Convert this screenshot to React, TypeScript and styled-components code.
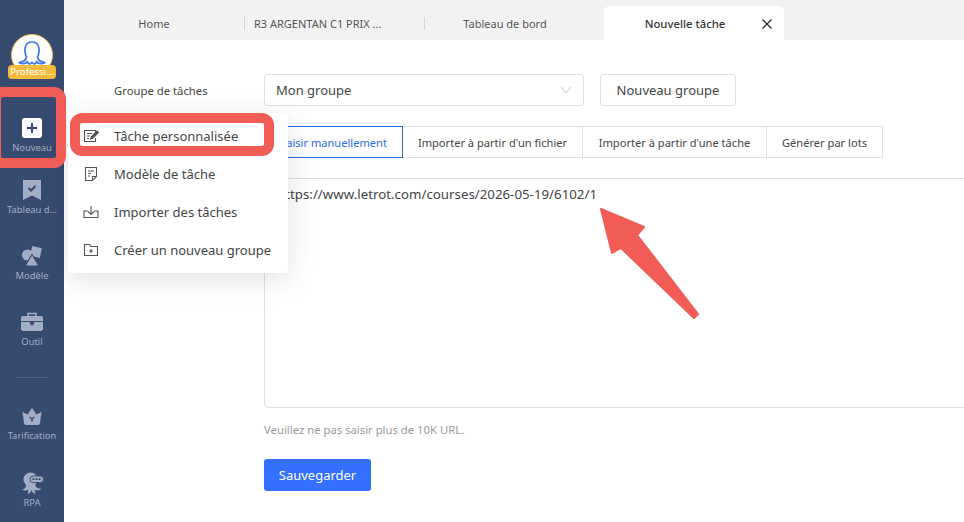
import React from "react";
import styled, { createGlobalStyle } from "styled-components";

const GlobalStyle = createGlobalStyle`
  html, body {
    margin: 0;
    padding: 0;
    width: 964px;
    height: 522px;
    overflow: hidden;
    background: #fff;
    font-family: "Noto Sans", "Open Sans", sans-serif;
  }
  * { box-sizing: border-box; }
`;

const Page = styled.div`
  position: relative;
  display: flex;
  width: 964px;
  height: 522px;
  overflow: hidden;
`;

const Sidebar = styled.aside`
  flex: 0 0 64px;
  display: flex;
  flex-direction: column;
  align-items: center;
  padding-top: 34px;
  background: #374a70;
`;

const Avatar = styled.div`
  position: relative;
  flex: none;
  width: 48px;
  height: 45px;
  margin-bottom: 25px;
`;

const AvatarCircle = styled.div`
  width: 42px;
  height: 42px;
  margin: 0 auto;
  padding: 5px 4px 0;
  border-radius: 50%;
  border: 1px solid #f6c142;
  background: #fff;
`;

const Badge = styled.div`
  position: absolute;
  left: 0;
  bottom: 0;
  width: 48px;
  height: 14px;
  border-radius: 4px;
  background: #f6bb3c;
  color: #fff;
  font-size: 9.6px;
  line-height: 14px;
  text-align: center;
  white-space: nowrap;
`;

const NavItem = styled.div<{ $height?: number }>`
  flex: none;
  display: flex;
  flex-direction: column;
  align-items: center;
  justify-content: center;
  width: 64px;
  height: ${(p) => p.$height ?? 62}px;
  gap: 1px;
  color: #a3aec6;
  font-size: 9.4px;
  line-height: 14px;
  white-space: nowrap;
`;

const NavIcon = styled.svg`
  display: block;
  width: 24px;
  height: 24px;
`;

const NavDivider = styled.div`
  flex: none;
  width: 32px;
  height: 1px;
  margin: 17px 0 12px;
  background: #4d5f83;
`;

const Main = styled.main`
  flex: 1;
  min-width: 0;
  display: flex;
  flex-direction: column;
`;

const TabBar = styled.nav`
  flex: 0 0 40px;
  display: flex;
  align-items: flex-end;
  background: #f2f2f2;
  font-size: 11px;
`;

const Tab = styled.div<{ $active?: boolean; $divider?: boolean; $first?: boolean }>`
  position: relative;
  flex: 0 0 180px;
  height: 34px;
  display: flex;
  align-items: center;
  justify-content: center;
  padding-right: ${(p) => (p.$first ? 0 : 18)}px;
  border-radius: 6px 6px 0 0;
  background: ${(p) => (p.$active ? "#fff" : "transparent")};
  color: ${(p) => (p.$active ? "#333" : "#555")};
  font-size: ${(p) => (p.$active ? 11.3 : 11)}px;
  font-weight: ${(p) => (p.$active ? 500 : 400)};
  &::before {
    content: "";
    display: ${(p) => (p.$divider ? "block" : "none")};
    position: absolute;
    left: 0;
    top: 11px;
    width: 1px;
    height: 13px;
    background: #d4d4d4;
  }
`;

const TabLong = styled.span`
  display: block;
  width: 100%;
  padding-left: 10px;
  white-space: nowrap;
`;

const TabClose = styled.svg`
  position: absolute;
  right: 12px;
  top: 13px;
  width: 10px;
  height: 10px;
`;

const Content = styled.section`
  flex: 1;
  display: flex;
  flex-direction: column;
  padding: 34px 0 0 200px;
`;

const GroupRow = styled.div`
  position: relative;
  display: flex;
  gap: 16px;
  height: 32px;
`;

const FieldLabel = styled.label`
  position: absolute;
  left: -150px;
  top: 1px;
  color: #444;
  font-size: 11.3px;
  line-height: 32px;
  white-space: nowrap;
`;

const Select = styled.div`
  width: 320px;
  height: 32px;
  display: flex;
  align-items: center;
  justify-content: space-between;
  padding: 0 11px;
  border: 1px solid #dcdfe6;
  border-radius: 3px;
  color: #444;
  font-size: 13px;
`;

const GhostButton = styled.button`
  width: 136px;
  height: 32px;
  padding: 0;
  border: 1px solid #dcdfe6;
  border-radius: 3px;
  background: #fff;
  color: #444;
  font-family: inherit;
  font-size: 13px;
`;

const ModeTabs = styled.div`
  display: flex;
  margin-top: 20px;
  height: 32px;
`;

const ModeTab = styled.div<{ $active?: boolean; $w: number }>`
  width: ${(p) => p.$w}px;
  margin-left: -1px;
  display: flex;
  align-items: center;
  justify-content: center;
  border: 1px solid ${(p) => (p.$active ? "#2a6de0" : "#dcdfe6")};
  color: ${(p) => (p.$active ? "#2a6de0" : "#444")};
  font-size: 11.1px;
  white-space: nowrap;
  position: relative;
  z-index: ${(p) => (p.$active ? 1 : 0)};
  &:first-child {
    margin-left: 0;
  }
`;

const UrlBox = styled.div`
  width: 860px;
  height: 230px;
  margin-top: 20px;
  padding: 6px 12px;
  border: 1px solid #dcdfe6;
  border-radius: 4px;
  color: #444;
  font-size: 13.3px;
  line-height: 18px;
`;

const Hint = styled.p`
  margin: 14px 0 0;
  color: #9a9a9a;
  font-size: 11.3px;
  line-height: 16px;
`;

const PrimaryButton = styled.button`
  width: 107px;
  height: 32px;
  margin-top: 21px;
  padding: 0;
  border: none;
  border-radius: 3px;
  background: #3370ff;
  color: #fff;
  font-family: inherit;
  font-size: 13px;
`;

const Menu = styled.ul`
  position: absolute;
  left: 68px;
  top: 113px;
  width: 220px;
  height: 160px;
  margin: 0;
  padding: 4px 0 0;
  list-style: none;
  border-radius: 3px;
  background: #fff;
  box-shadow: 0 6px 30px rgba(0, 0, 0, 0.12);
  z-index: 5;
`;

const MenuItem = styled.li`
  display: flex;
  align-items: center;
  height: 38px;
  padding-left: 15px;
  gap: 15px;
  color: #444;
  font-size: 13px;
  white-space: nowrap;
`;

const MenuIcon = styled.svg`
  flex: none;
  width: 16px;
  height: 16px;
  fill: none;
  stroke: #555;
  stroke-width: 1.1;
`;

const Callout = styled.div<{ $l: number; $t: number; $w: number; $h: number }>`
  position: absolute;
  left: ${(p) => p.$l}px;
  top: ${(p) => p.$t}px;
  width: ${(p) => p.$w}px;
  height: ${(p) => p.$h}px;
  border: 10px solid #f25c57;
  border-radius: 12px;
  pointer-events: none;
  z-index: 6;
`;

const Arrow = styled.svg`
  position: absolute;
  left: 590px;
  top: 200px;
  width: 120px;
  height: 130px;
  z-index: 6;
`;

const navFill = "#a3aec6";
const navBg = "#374a70";

const App = () => (
  <Page>
    <GlobalStyle />
    <Sidebar>
      <Avatar>
        <AvatarCircle>
          <svg width="32" height="26" viewBox="0 0 32 26" fill="none" stroke="#3f77e8" strokeWidth="1.7" strokeLinejoin="round" strokeLinecap="round">
            <path d="M10.500 17C7.500 10 8.500 2 16 2C23.500 2 24.500 10 21.500 17C22 20 25 22 29 22.500C26 24.500 22 24 20.500 21.500C20 24 18 25 16 22.500C14 25 12 24 11.500 21.500C10 24 6 24.500 3 22.500C7 22 10 20 10.500 17Z" />
          </svg>
        </AvatarCircle>
        <Badge>Professi...</Badge>
      </Avatar>

      <NavItem>
        <NavIcon viewBox="0 0 24 24">
          <rect x="2" y="2" width="20" height="20" rx="3" fill="#fff" />
          <path d="M12 7v10M7 12h10" stroke={navBg} strokeWidth="2.2" />
        </NavIcon>
        Nouveau
      </NavItem>
      <NavItem>
        <NavIcon viewBox="0 0 24 24">
          <path d="M3 2h18v20l-9-4.500L3 22z" fill={navFill} />
          <path d="M8.500 10l2.500 2.500 4.500-4.500" stroke={navBg} strokeWidth="2" fill="none" />
        </NavIcon>
        Tableau d...
      </NavItem>
      <NavItem $height={70}>
        <NavIcon viewBox="0 0 24 24">
          <circle cx="7.500" cy="11" r="5.500" fill={navFill} />
          <rect x="11" y="3" width="10" height="10" transform="rotate(12 16 8)" fill={navFill} />
          <path d="M12 10.500l7 11.500H5z" fill={navFill} stroke={navBg} strokeWidth="1.2" />
        </NavIcon>
        Modèle
      </NavItem>
      <NavItem>
        <NavIcon viewBox="0 0 24 24">
          <path d="M8 6V3.500h8V6" fill="none" stroke={navFill} strokeWidth="1.600" />
          <path d="M1 8a2 2 0 0 1 2-2h18a2 2 0 0 1 2 2v3H1z" fill={navFill} />
          <path d="M1 12h9v2h4v-2h9v7a2 2 0 0 1-2 2H3a2 2 0 0 1-2-2z" fill={navFill} />
          <circle cx="12" cy="13.500" r="1.600" fill="none" stroke={navBg} />
        </NavIcon>
        Outil
      </NavItem>

      <NavDivider />

      <NavItem $height={66}>
        <NavIcon viewBox="0 0 24 24">
          <path d="M2.500 8l5 2.500L12 4l4.500 6.500 5-2.500-1.500 11a2 2 0 0 1-2 2H6a2 2 0 0 1-2-2z" fill={navFill} />
          <path d="M9.500 13l2.500 2 2.500-2M12 15v2.500" stroke={navBg} strokeWidth="1.600" fill="none" />
        </NavIcon>
        Tarification
      </NavItem>
      <NavItem $height={68}>
        <NavIcon viewBox="0 0 24 24">
          <circle cx="10.500" cy="8.500" r="7" fill={navFill} />
          <path d="M6 12h9l.5 3c1 2 3.500 3 6 2.500-1.500 2-5 2.500-7 1l1 4.500c-2-.5-3.500-2-4-4-.500 2-2 3.500-4 4l1-4.500c-2 1.500-4.500 1.500-6.500 0 2.500 0 4.500-2 4-6.500z" fill={navFill} />
          <rect x="10" y="5" width="13.500" height="6.500" rx="3.200" fill={navFill} stroke={navBg} strokeWidth=".9" />
          <path d="M12.500 8.200h8.500" stroke={navBg} strokeWidth="1.800" strokeDasharray="2 1" />
        </NavIcon>
        RPA
      </NavItem>
    </Sidebar>

    <Main>
      <TabBar>
        <Tab $first>Home</Tab>
        <Tab $divider>
          <TabLong>R3 ARGENTAN C1 PRIX ...</TabLong>
        </Tab>
        <Tab $divider>Tableau de bord</Tab>
        <Tab $active>
          Nouvelle tâche
          <TabClose viewBox="0 0 10 10">
            <path d="M.5.5l9 9M9.500.5l-9 9" stroke="#222" strokeWidth="1.100" />
          </TabClose>
        </Tab>
      </TabBar>

      <Content>
        <GroupRow>
          <FieldLabel>Groupe de tâches</FieldLabel>
          <Select>
            Mon groupe
            <svg width="12" height="8" viewBox="0 0 12 8" fill="none" stroke="#c4c4c4">
              <path d="M1 1l5 6 5-6" />
            </svg>
          </Select>
          <GhostButton>Nouveau groupe</GhostButton>
        </GroupRow>

        <ModeTabs>
          <ModeTab $active $w={139}>Saisir manuellement</ModeTab>
          <ModeTab $w={181}>Importer à partir d'un fichier</ModeTab>
          <ModeTab $w={185}>Importer à partir d'une tâche</ModeTab>
          <ModeTab $w={117}>Générer par lots</ModeTab>
        </ModeTabs>

        <UrlBox>https://www.letrot.com/courses/2026-05-19/6102/1</UrlBox>
        <Hint>Veuillez ne pas saisir plus de 10K URL.</Hint>
        <PrimaryButton>Sauvegarder</PrimaryButton>
      </Content>
    </Main>

    <Menu>
      <MenuItem>
        <MenuIcon viewBox="0 0 16 16">
          <path d="M12.500 5V2.500h-11v11h11V10" />
          <path d="M4 5.500h5M4 8h3M4 10.500h2" />
          <path d="M7.500 11l1-2.500 5.500-5.500 1.500 1.500-5.500 5.500z" fill="#555" />
        </MenuIcon>
        Tâche personnalisée
      </MenuItem>
      <MenuItem>
        <MenuIcon viewBox="0 0 16 16">
          <path d="M2.500 1.500h11v9l-4 4h-7z" />
          <path d="M9.500 14.500v-4h4M5 5h6M5 7.500h3M5 10h2" />
        </MenuIcon>
        Modèle de tâche
      </MenuItem>
      <MenuItem>
        <MenuIcon viewBox="0 0 16 16">
          <path d="M5 7H1v6.500h14V7h-4" />
          <path d="M8 2v8M5 7.500L8 10.500l3-3" />
        </MenuIcon>
        Importer des tâches
      </MenuItem>
      <MenuItem>
        <MenuIcon viewBox="0 0 16 16">
          <path d="M1.500 2.500h5l1.500 2h6.500v9h-13z" />
          <path d="M8 7v4M6 9h4" />
        </MenuIcon>
        Créer un nouveau groupe
      </MenuItem>
    </Menu>

    <Callout $l={-9} $t={87} $w={75} $h={81} />
    <Callout $l={70} $t={113} $w={204} $h={43} />

    <Arrow viewBox="590 200 120 130">
      <path
        d="M601 209L644 227L637 235L698 314L694 318L621 248L612 253Z"
        fill="#f25c57"
        stroke="#f25c57"
        strokeWidth="2"
        strokeLinejoin="round"
      />
    </Arrow>
  </Page>
);

export default App;
